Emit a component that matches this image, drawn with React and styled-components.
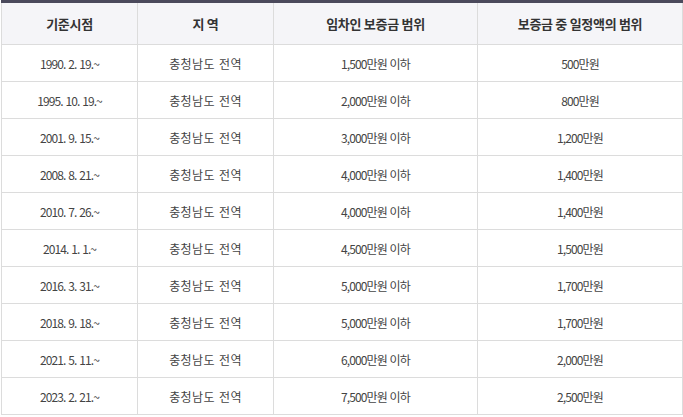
import styled, { createGlobalStyle } from "styled-components";

const GlobalStyle = createGlobalStyle`
  body {
    margin: 0;
    background: #fff;
    font-family: "Noto Sans CJK KR", "Noto Sans", sans-serif;
  }
`;

const Wrap = styled.div`
  padding-left: 1px;
  width: 681px;
`;

const Table = styled.table`
  width: 681px;
  border-collapse: collapse;
  table-layout: fixed;
  border-top: 3px solid #4b4a5c;
`;

const Th = styled.th`
  height: 41px;
  padding: 0;
  background: #f5f5f8;
  border: 1px solid #dcdcdc;
  border-top: none;
  color: #333;
  font-size: 13px;
  font-weight: 700;
  text-align: center;
  letter-spacing: -0.3px;
`;

const Td = styled.td`
  height: 36px;
  padding: 0;
  border: 1px solid #dcdcdc;
  color: #444;
  font-size: 12px;
  text-align: center;
  letter-spacing: ${(p) => (p.$hangul ? "0.4px" : "-0.9px")};
  word-spacing: ${(p) => (p.$hangul ? "1px" : "1px")};
`;

const rows = [
  ["1990. 2. 19.~", "1,500만원 이하", "500만원"],
  ["1995. 10. 19.~", "2,000만원 이하", "800만원"],
  ["2001. 9. 15.~", "3,000만원 이하", "1,200만원"],
  ["2008. 8. 21.~", "4,000만원 이하", "1,400만원"],
  ["2010. 7. 26.~", "4,000만원 이하", "1,400만원"],
  ["2014. 1. 1.~", "4,500만원 이하", "1,500만원"],
  ["2016. 3. 31.~", "5,000만원 이하", "1,700만원"],
  ["2018. 9. 18.~", "5,000만원 이하", "1,700만원"],
  ["2021. 5. 11.~", "6,000만원 이하", "2,000만원"],
  ["2023. 2. 21.~", "7,500만원 이하", "2,500만원"],
];

export default function App() {
  return (
    <>
      <GlobalStyle />
      <Wrap>
        <Table>
          <colgroup>
            <col style={{ width: "136px" }} />
            <col style={{ width: "136px" }} />
            <col style={{ width: "204px" }} />
            <col style={{ width: "205px" }} />
          </colgroup>
          <thead>
            <tr>
              <Th>기준시점</Th>
              <Th>지 역</Th>
              <Th>임차인 보증금 범위</Th>
              <Th>보증금 중 일정액의 범위</Th>
            </tr>
          </thead>
          <tbody>
            {rows.map(([date, range, amount]) => (
              <tr key={date}>
                <Td>{date}</Td>
                <Td $hangul>충청남도 전역</Td>
                <Td>{range}</Td>
                <Td>{amount}</Td>
              </tr>
            ))}
          </tbody>
        </Table>
      </Wrap>
    </>
  );
}
